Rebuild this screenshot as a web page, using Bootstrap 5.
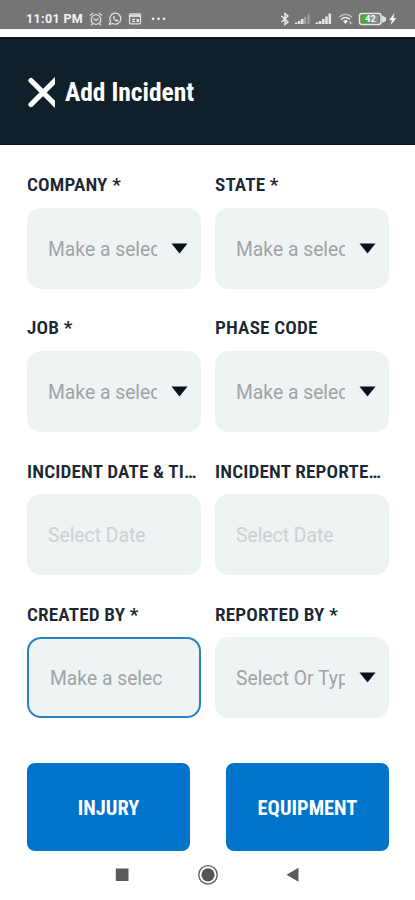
<!DOCTYPE html>
<html lang="en">
<head>
<meta charset="utf-8">
<meta name="viewport" content="width=device-width, initial-scale=1">
<title>Add Incident</title>
<link href="https://cdn.jsdelivr.net/npm/bootstrap@5.3.0/dist/css/bootstrap.min.css" rel="stylesheet">
<style>
body{font-family:Roboto,"Liberation Sans",sans-serif;height:900px;overflow:hidden;background:#fff;color:#1b2732}
.cond{font-family:"Roboto Condensed",Roboto,sans-serif;font-stretch:75%;font-weight:700;white-space:nowrap}
.statusbar{height:29px;background:#757575;color:#f2f2f2;padding:9px 18px 0 26px}
.clock{font-size:12.5px;letter-spacing:.35px;font-weight:700;line-height:20px;width:58px;white-space:nowrap}
.statusbar svg,.titlebar svg,.sysnav svg{display:block;flex:none}
.titlebar{height:108px;margin-top:8px;background:#10202b;border-top:2px solid #0a141c;border-bottom:1px solid #0a141c;padding-left:27px}
.titlebar h1{font-size:25.500px;line-height:30px;margin:1px 0 0 10px}
.fields{display:grid;grid-template-columns:174px 174px;column-gap:14px;padding:27.200px 27px 0;grid-auto-rows:143.200px}
.caption{font-size:19.200px;letter-spacing:.15px;font-weight:650;line-height:26px;height:35.700px;display:block}
.box{height:81px;border-radius:14px;background:#eef3f4;padding:0 13px 0 21px;font-size:19.300px;color:#a0a4a5}
.box.active{border:2px solid #2b80bf;padding-left:21px}
.box.date{color:#cdd1d2}
.val{width:109px;overflow:hidden;white-space:nowrap;line-height:28px;padding-top:3px}
.active .val{width:113px}
.action{height:88px;width:163px;border-radius:8px;background:#0073cb;color:#fff;font-size:20.400px;padding:2px 0 0}
.actions{padding:0 26px 0 27px;margin-top:18px;height:88px}
.sysnav{height:49px;padding-left:115px}
</style>
</head>
<body>
<div class="statusbar d-flex">
  <span class="clock">11:01 PM</span>
  <svg width="84" height="20" viewBox="0 0 84 20" fill="none" stroke="#dedede" stroke-width="1.3">
    <circle cx="12" cy="10.5" r="4.8"/><path d="M6 6.5l3-2.500M18 6.500l-3-2.500M9.500 9.500l2.500 2 2.500-2M8.500 14.500l-1.500 1.800M15.500 14.500l1.500 1.800"/>
    <path d="M25.500 15.500l1-3.200a5.500 5.500 0 1 1 2.200 2.200z"/><path d="M29 7.500c0 3 2 5 5 5l.5-1.500-1.800-.8-.8.800c-1-.5-1.300-1-1.600-1.800l.7-.7-.6-1.500z" fill="#e6e6e6" stroke="none"/>
    <rect x="45.500" y="4.800" width="11" height="10" rx="1"/><path d="M45.500 6.700h11" stroke-width="2.500"/><path d="M48 10.500h3M48 12.700h3"/><path d="M52.500 10h2.500v3h-2.500z" fill="#e6e6e6" stroke="none"/>
    <g fill="#f0f0f0" stroke="none"><circle cx="69" cy="9.700" r="1.300"/><circle cx="74.500" cy="9.700" r="1.300"/><circle cx="80" cy="9.700" r="1.300"/></g>
  </svg>
  <svg class="ms-auto" width="116" height="20" viewBox="0 0 116 20" fill="none">
    <path d="M.5 7l6.500 6-3 2.500v-11l3 2.500-6.500 6" stroke="#eee" stroke-width="1.400"/>
    <g fill="#e6e6e6"><path d="M14 15v-1.500h2.500V15zM17 15v-3h2.500v3zM20 15v-5h2.500v5z"/><path d="M23 15V8h2.200v7zM26.500 15V5h2v10z" fill="#a0a0a0"/><path d="M34.500 15v-1.500h2.700V15zM37.700 15v-3h2.700v3zM41 15v-5h2.600v5zM44.200 15V7.500h2.600V15zM47.500 15V4.500h2.600V15z"/></g>
    <path d="M58 8.200c4-3.800 9-3.800 13 0" stroke="#bbb" stroke-width="1.500"/><path d="M60 10.500c3-2.600 6-2.600 9 0" stroke="#eee" stroke-width="1.500"/><path d="M62 12c1.800-1.400 3.200-1.400 5 0l-2.500 3z" fill="#eee"/><path d="M69.500 12v3.500M68 14h3.500" stroke="#bbb"/>
    <rect x="78.500" y="4.500" width="21.500" height="11" rx="2.500" stroke="#e5e5e5" stroke-width="1.500"/><path d="M80.500 6.300h8.500v7.400h-8.500z" fill="#45b52a"/><path d="M89 6.300h9v7.400H89z" fill="#8b8b8b"/><path d="M101 6.500l4 2v3.500l-4 2z" fill="#ddd"/>
    <text x="89.500" y="13.300" text-anchor="middle" font-size="9" font-weight="700" fill="#fff">42</text>
    <path d="M113.500 4l-5.500 7h2.800l-1 5 5.500-7h-2.800z" fill="#f2f2f2"/>
  </svg>
</div>
<header class="titlebar d-flex align-items-center">
  <svg width="28" height="32" viewBox="0 0 28 32" overflow="hidden"><path d="M4 4.500l25 25M4 28.500l25-25" stroke="#fff" stroke-width="5.200" stroke-linecap="round"/></svg>
  <h1 class="cond text-white">Add Incident</h1>
</header>
<main>
  <div class="fields">
    <div><label class="cond caption">COMPANY *</label><div class="box d-flex align-items-center justify-content-between"><span class="val">Make a selec</span><svg width="17" height="11"><path d="M.500.500h16l-8 10z" fill="#07121c"/></svg></div></div>
    <div><label class="cond caption">STATE *</label><div class="box d-flex align-items-center justify-content-between"><span class="val">Make a selec</span><svg width="17" height="11"><path d="M.500.500h16l-8 10z" fill="#07121c"/></svg></div></div>
    <div><label class="cond caption">JOB *</label><div class="box d-flex align-items-center justify-content-between"><span class="val">Make a selec</span><svg width="17" height="11"><path d="M.500.500h16l-8 10z" fill="#07121c"/></svg></div></div>
    <div><label class="cond caption">PHASE CODE</label><div class="box d-flex align-items-center justify-content-between"><span class="val">Make a selec</span><svg width="17" height="11"><path d="M.500.500h16l-8 10z" fill="#07121c"/></svg></div></div>
    <div><label class="cond caption">INCIDENT DATE &amp; TI…</label><div class="box date d-flex align-items-center"><span class="val">Select Date</span></div></div>
    <div><label class="cond caption">INCIDENT REPORTE…</label><div class="box date d-flex align-items-center"><span class="val">Select Date</span></div></div>
    <div><label class="cond caption">CREATED BY *</label><div class="box active d-flex align-items-center"><span class="val">Make a selec</span></div></div>
    <div><label class="cond caption">REPORTED BY *</label><div class="box d-flex align-items-center justify-content-between"><span class="val">Select Or Typ</span><svg width="17" height="11"><path d="M.500.500h16l-8 10z" fill="#07121c"/></svg></div></div>
  </div>
  <div class="actions d-flex justify-content-between">
    <button class="btn action cond">INJURY</button>
    <button class="btn action cond">EQUIPMENT</button>
  </div>
</main>
<nav class="sysnav d-flex align-items-center">
  <svg width="184" height="22" viewBox="0 0 184 22"><path d="M.8 4.500h12.700V17H.8z" fill="#5b5b5b"/><circle cx="93" cy="10.800" r="9.200" fill="none" stroke="#666" stroke-width="1.400"/><circle cx="93" cy="10.800" r="6.600" fill="#555"/><path d="M171.500 10.800l12-7v14z" fill="#5b5b5b"/></svg>
</nav>
<script src="https://cdn.jsdelivr.net/npm/bootstrap@5.3.0/dist/js/bootstrap.bundle.min.js"></script>
</body>
</html>
